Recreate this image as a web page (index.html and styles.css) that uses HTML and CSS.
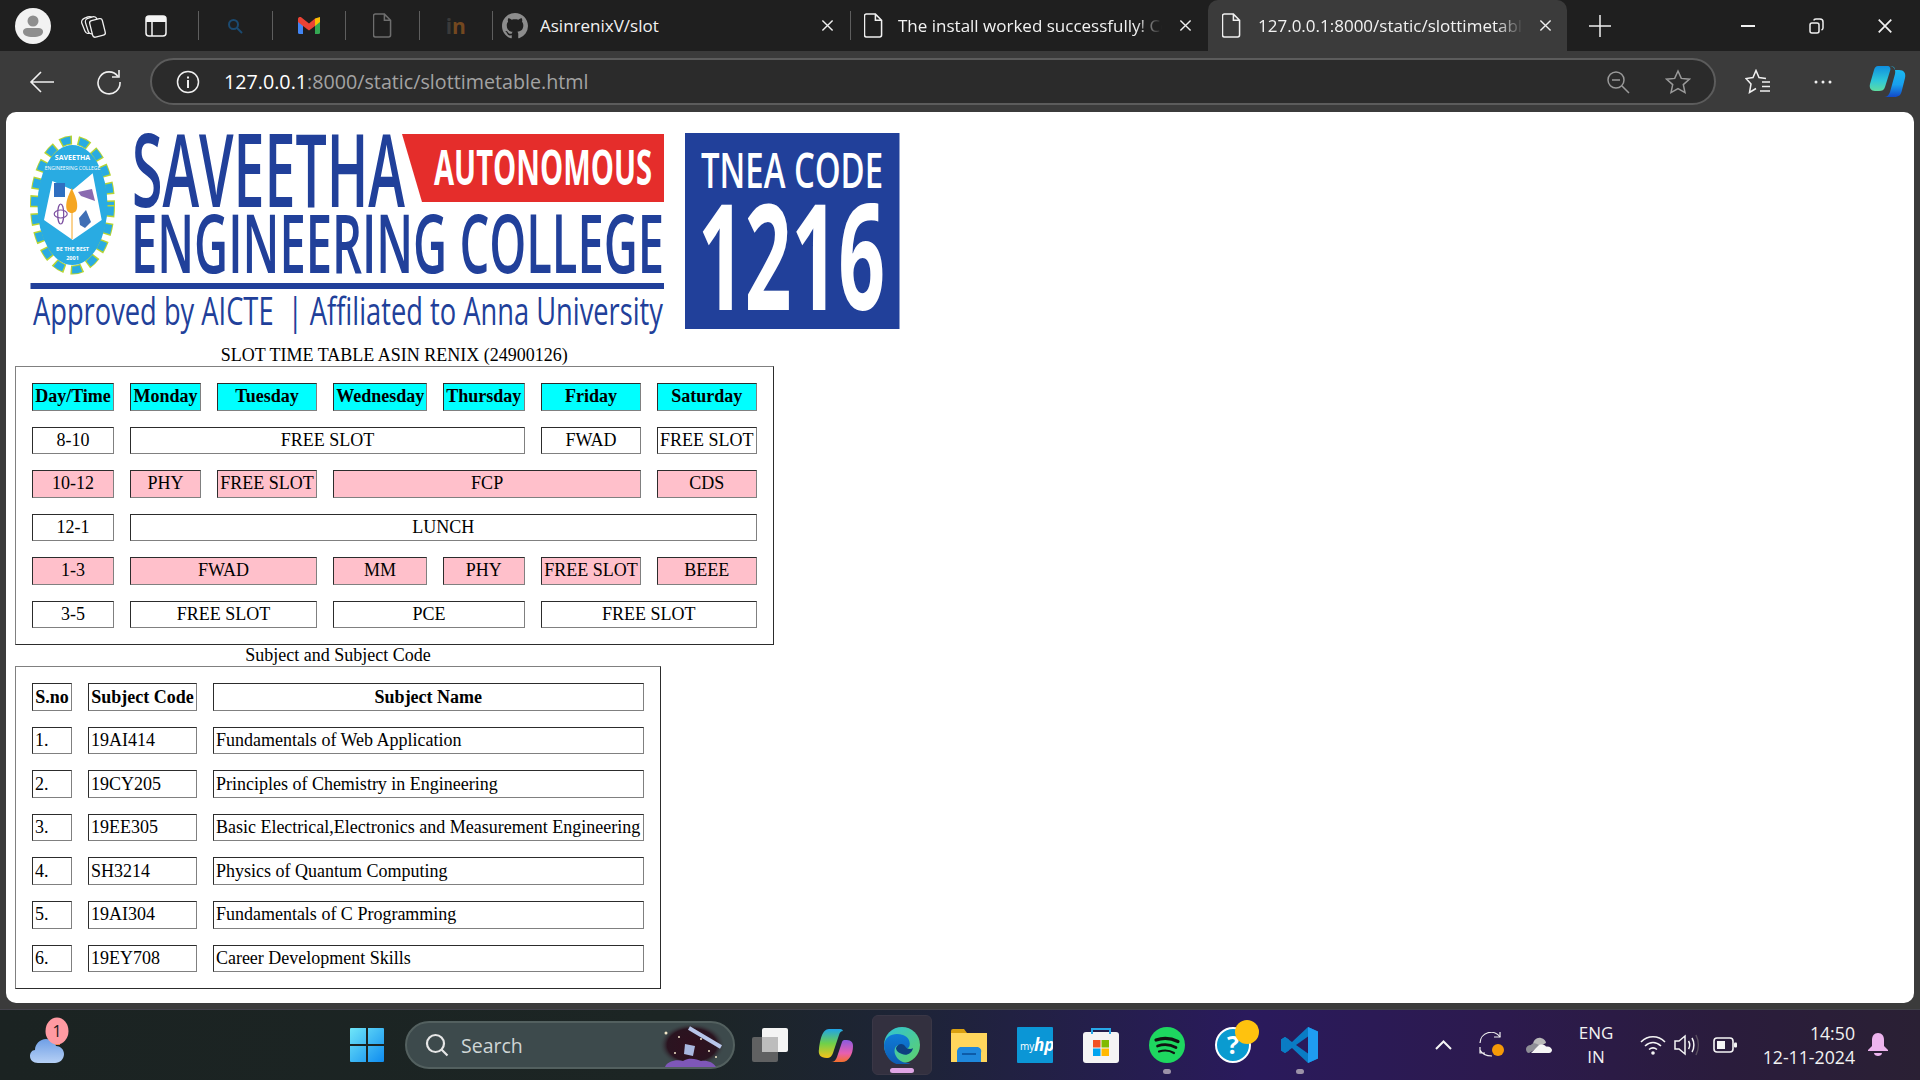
FILE: index.html
```html
<!DOCTYPE html>
<html lang="en">
<head>
  <meta charset="UTF-8" />
  <title>127.0.0.1:8000/static/slottimetable.html</title>
  <link rel="stylesheet" href="styles.css">
</head>
<body>

<svg class="defs" width="0" height="0">
  <symbol id="doc" viewBox="0 0 20 26"><path d="M2.5 1h9.5l6.5 6.5V23a2 2 0 0 1-2 2h-14a2 2 0 0 1-2-2V3a2 2 0 0 1 2-2z M12 1v6.5h6.5" fill="none" stroke="currentColor" stroke-width="1.6"/></symbol>
  <symbol id="cross" viewBox="0 0 14 14"><path d="M1.5 1.5l11 11M12.5 1.5l-11 11" fill="none" stroke="currentColor" stroke-width="1.5"/></symbol>
</svg>

<header class="tabbar">
  <div class="slot s-avatar">
    <svg width="36" height="36" viewBox="0 0 36 36"><circle cx="18" cy="18" r="18" fill="#f2f2f2"/><circle cx="18" cy="13" r="5.5" fill="#8e8e8e"/><path d="M8 24c0-3 2-4 5-4h10c3 0 5 1 5 4 0 3-4 5-10 5s-10-2-10-5z" fill="#8e8e8e"/></svg>
  </div>
  <div class="slot s-coll">
    <svg width="26" height="26" viewBox="0 0 26 26" fill="#1f1f1f" stroke="#f0f0f0" stroke-width="1.3"><rect x="2" y="4" width="12" height="16" rx="4" transform="rotate(-22 8 12)"/><rect x="5.500" y="4.500" width="12" height="16" rx="3.500" transform="rotate(-18 11 12)"/><rect x="10" y="6.500" width="13" height="17" rx="2.500" transform="rotate(-14 16 15)"/></svg>
  </div>
  <div class="slot s-side">
    <svg width="22" height="22" viewBox="0 0 22 22"><rect x="1" y="1" width="20" height="20" rx="3" fill="none" stroke="#f5f5f5" stroke-width="1.5"/><path d="M1 4a3 3 0 0 1 3-3h14a3 3 0 0 1 3 3v3H1z" fill="#f5f5f5"/><path d="M7 7v14" stroke="#f5f5f5" stroke-width="1.5"/></svg>
  </div>
  <i class="divider first"></i>
  <div class="slot pin">
    <svg width="16" height="16" viewBox="0 0 16 16" fill="none" stroke="#1b4a70" stroke-width="2"><circle cx="6.5" cy="6.5" r="4.5"/><path d="M10 10l5 5"/></svg>
  </div>
  <i class="divider"></i>
  <div class="slot pin">
    <svg width="22" height="17" viewBox="0 0 22 17"><path d="M0 3v12.5A1.5 1.5 0 0 0 1.500 17H5V8z" fill="#4285f4"/><path d="M22 3v12.500a1.500 1.500 0 0 1-1.500 1.500H17V8z" fill="#34a853"/><path d="M17 1.500L22 0v5l-5 4z" fill="#fbbc04"/><path d="M5 9L0 5V2c0-2 2.500-2.500 3.500-1.500L11 6.500l6-5V9l-6 4.500z" fill="#ea4335"/></svg>
  </div>
  <i class="divider"></i>
  <div class="slot pin dim"><svg width="19" height="25"><use href="#doc"/></svg></div>
  <i class="divider"></i>
  <div class="slot pin"><span class="in-mark"><span class="in-dot">i</span>n</span></div>
  <i class="divider"></i>

  <div class="tab">
    <div class="slot tab-icon">
      <svg width="26" height="26" viewBox="0 0 16 16"><path fill="#8c8c8c" d="M8 0C3.58 0 0 3.58 0 8c0 3.54 2.29 6.53 5.47 7.59.4.07.55-.17.55-.38 0-.19-.01-.82-.01-1.49-2.01.37-2.53-.49-2.69-.94-.09-.23-.48-.94-.82-1.13-.28-.15-.68-.52-.01-.53.63-.01 1.08.58 1.23.82.72 1.21 1.87.87 2.33.66.07-.52.28-.87.51-1.07-1.78-.2-3.64-.89-3.64-3.95 0-.87.31-1.59.82-2.15-.08-.2-.36-1.02.08-2.12 0 0 .67-.21 2.2.82.64-.18 1.32-.27 2-.27.68 0 1.36.09 2 .27 1.53-1.04 2.2-.82 2.2-.82.44 1.1.16 1.92.08 2.12.51.56.82 1.27.82 2.15 0 3.07-1.87 3.75-3.65 3.95.29.25.54.73.54 1.48 0 1.07-.01 1.93-.01 2.2 0 .21.15.46.55.38A8.013 8.013 0 0016 8c0-4.42-3.58-8-8-8z"/></svg>
    </div>
    <div class="tab-title">AsinrenixV/slot</div>
    <div class="slot tab-close"><svg width="13" height="13"><use href="#cross"/></svg></div>
  </div>
  <i class="divider"></i>
  <div class="tab">
    <div class="slot tab-icon"><svg width="19" height="25"><use href="#doc"/></svg></div>
    <div class="tab-title fade">The install worked successfully! Congratulations!</div>
    <div class="slot tab-close"><svg width="13" height="13"><use href="#cross"/></svg></div>
  </div>
  <div class="tab active">
    <div class="slot tab-icon"><svg width="19" height="25"><use href="#doc"/></svg></div>
    <div class="tab-title fade">127.0.0.1:8000/static/slottimetable.html</div>
    <div class="slot tab-close"><svg width="13" height="13"><use href="#cross"/></svg></div>
  </div>
  <div class="slot new-tab">
    <svg width="22" height="22" viewBox="0 0 22 22"><path d="M11 0v22M0 11h22" stroke="#f0f0f0" stroke-width="1.5"/></svg>
  </div>
  <div class="spacer"></div>
  <div class="slot win-btn"><svg width="14" height="2"><rect width="14" height="2" fill="#f0f0f0"/></svg></div>
  <div class="slot win-btn">
    <svg width="15" height="16" viewBox="0 0 15 16" fill="none" stroke="#f0f0f0" stroke-width="1.5"><rect x="1" y="5" width="9" height="10" rx="2"/><path d="M5 2.500C5 1.500 6 1 7 1h4c2 0 3 1 3 3v6c0 1-.5 1.500-1.500 2"/></svg>
  </div>
  <div class="slot win-btn last"><svg width="16" height="16"><use href="#cross"/></svg></div>
</header>

<nav class="toolbar">
  <div class="slot nav-back">
    <svg width="26" height="24" viewBox="0 0 26 24" fill="none" stroke="#f0f0f0" stroke-width="1.6"><path d="M25 12H2M12 2L2 12l10 10"/></svg>
  </div>
  <div class="slot nav-reload">
    <svg width="26" height="26" viewBox="0 0 26 26" fill="none" stroke="#f0f0f0" stroke-width="1.6"><path d="M22 7.500A11 11 0 1 0 24 13"/><path d="M23 1v7h-7"/></svg>
  </div>
  <div class="urlbar">
    <div class="slot url-info">
      <svg width="24" height="24" viewBox="0 0 24 24"><circle cx="12" cy="12" r="10.500" fill="none" stroke="#f0f0f0" stroke-width="1.5"/><rect x="11" y="10" width="2" height="8" fill="#f0f0f0"/><rect x="11" y="6.500" width="2" height="2" fill="#f0f0f0"/></svg>
    </div>
    <div class="url-text"><span class="url-host">127.0.0.1</span>:8000/static/slottimetable.html</div>
    <div class="slot url-act">
      <svg width="24" height="24" viewBox="0 0 24 24" fill="none" stroke="#9a9a9a" stroke-width="1.500"><circle cx="10" cy="10" r="8"/><path d="M6 10h8M16 16l7 7"/></svg>
    </div>
    <div class="slot url-act">
      <svg width="26" height="26" viewBox="0 0 26 26" fill="none" stroke="#9a9a9a" stroke-width="1.500"><path d="M13 2l3.300 7.400 8 .8-6 5.400 1.700 8L13 19.500 6 23.600l1.700-8-6-5.400 8-.8z"/></svg>
    </div>
  </div>
  <div class="slot tool-fav">
    <svg width="27" height="26" viewBox="0 0 27 26" fill="none" stroke="#f0f0f0" stroke-width="1.500"><path d="M21 9.500L14 8.500 11 1.500 8 8.500 1 9.500l5 5.500-1.500 8.500 6.500-4"/><path d="M17 13h8M17 17.500h8M15 22h10"/></svg>
  </div>
  <div class="slot tool-more">
    <svg width="18" height="4" viewBox="0 0 18 4" fill="#f0f0f0"><circle cx="2" cy="2" r="1.500"/><circle cx="9" cy="2" r="1.500"/><circle cx="16" cy="2" r="1.500"/></svg>
  </div>
  <div class="slot tool-copilot">
    <svg width="37" height="33" viewBox="0 0 37 33"><defs><linearGradient id="cp1" x1="0" y1="0" x2="0" y2="1"><stop offset="0" stop-color="#0f8fe0"/><stop offset=".6" stop-color="#2fc8d8"/><stop offset="1" stop-color="#5fdca0"/></linearGradient><linearGradient id="cp2" x1="0" y1="0" x2="0" y2="1"><stop offset="0" stop-color="#1bc0f0"/><stop offset=".6" stop-color="#18a0ee"/><stop offset="1" stop-color="#1248c8"/></linearGradient></defs><path d="M9 1h9c3 0 4 2 3 5l-5 16c-1 3-3 4-6 4H6c-4 0-6-3-5-7L5 5c1-3 2-4 4-4z" fill="url(#cp1)"/><path d="M21 1c3 0 5 1 5 4h4c5 0 7 3 6 8l-3 12c-1 5-3 7-8 7H15c3 0 5-2 6-5l5-18c1-4-1-8-5-8z" fill="url(#cp2)"/></svg>
  </div>
</nav>

<main class="page">
  <svg class="logo" width="889" height="222" viewBox="-1 0 889 222" font-family="'Open Sans', sans-serif" fill="#21409a">
    <path d="M386 12H648V80H406z" fill="#e52d2b"/>
    <text x="418" y="63" font-size="49" font-weight="700" fill="#fff" textLength="218" lengthAdjust="spacingAndGlyphs">AUTONOMOUS</text>
    <text x="116" y="85" font-size="101" font-weight="600" textLength="273" lengthAdjust="spacingAndGlyphs">SAVEETHA</text>
    <text x="115" y="151" font-size="81" font-weight="600" textLength="533" lengthAdjust="spacingAndGlyphs">ENGINEERING COLLEGE</text>
    <rect x="14.500" y="161" width="633.500" height="6"/>
    <text x="17" y="203" font-size="39" textLength="630" lengthAdjust="spacingAndGlyphs">Approved by AICTE&#160;&#160;|&#160;Affiliated to Anna University</text>
    <rect x="669" y="11" width="214.500" height="196"/>
    <text x="685" y="66" font-size="49" font-weight="600" fill="#fff" textLength="182" lengthAdjust="spacingAndGlyphs">TNEA CODE</text>
    <text x="682" y="188" font-size="147" font-weight="700" fill="#fff" textLength="187" lengthAdjust="spacingAndGlyphs">1216</text>

    <ellipse cx="56.500" cy="83" rx="38" ry="65" fill="none" stroke="#b7d433" stroke-width="9" stroke-dasharray="12 6"/>
    <ellipse cx="56.500" cy="83" rx="38" ry="65" fill="none" stroke="#29abe2" stroke-width="7" stroke-dasharray="9 9" stroke-dashoffset="-1.500"/>
    <ellipse cx="56.500" cy="83" rx="35" ry="60" fill="#29abe2"/>
    <path d="M28 98L36.300 59 56.700 68 76.700 51.300 85.700 98 56.700 118z" fill="#fff"/>
    <path d="M55.700 66c4 9 5.500 13 5.500 18s-2.500 7-5.500 7-5.500-2-5.500-7 1.500-9 5.500-18z" fill="#f5a623"/>
    <path d="M56 91v26" stroke="#f5a623" stroke-width="1"/>
    <rect x="38" y="61" width="11" height="14" fill="#2f6fc0"/>
    <ellipse cx="44.700" cy="92" rx="3" ry="10" fill="none" stroke="#7b4fa0" stroke-width="1.200"/>
    <ellipse cx="44.700" cy="92" rx="6.500" ry="4" fill="none" stroke="#7b4fa0" stroke-width="1.200"/>
    <path d="M63 96l7-8 5 12-6 6-5-3z" fill="#3f6fb5"/>
    <path d="M62 70l14-3 3 12-14-5z" fill="#8a6bb0"/>
    <text x="56.500" y="38" font-size="7" font-weight="700" fill="#fff" text-anchor="middle">SAVEETHA</text>
    <text x="56.500" y="48" font-size="5" fill="#fff" text-anchor="middle">ENGINEERING COLLEGE</text>
    <text x="56.500" y="129" font-size="5.500" font-weight="700" fill="#fff" text-anchor="middle">BE THE BEST</text>
    <text x="56.500" y="138" font-size="5.500" font-weight="700" fill="#fff" text-anchor="middle">2001</text>
  </svg>

  <table class="slots">
    <caption>SLOT TIME TABLE ASIN RENIX (24900126)</caption>
    <colgroup>
      <col class="c1"><col class="c2"><col class="c3"><col class="c4"><col class="c5"><col class="c6"><col class="c7">
    </colgroup>
    <tr class="head">
      <th>Day/Time</th><th>Monday</th><th>Tuesday</th><th>Wednesday</th><th>Thursday</th><th>Friday</th><th>Saturday</th>
    </tr>
    <tr>
      <td>8-10</td><td colspan="4">FREE SLOT</td><td>FWAD</td><td>FREE SLOT</td>
    </tr>
    <tr class="pink">
      <td>10-12</td><td>PHY</td><td>FREE SLOT</td><td colspan="3">FCP</td><td>CDS</td>
    </tr>
    <tr>
      <td>12-1</td><td colspan="6">LUNCH</td>
    </tr>
    <tr class="pink">
      <td>1-3</td><td colspan="2">FWAD</td><td>MM</td><td>PHY</td><td>FREE SLOT</td><td>BEEE</td>
    </tr>
    <tr>
      <td>3-5</td><td colspan="2">FREE SLOT</td><td colspan="2">PCE</td><td colspan="2">FREE SLOT</td>
    </tr>
  </table>

  <table class="subjects">
    <caption>Subject and Subject Code</caption>
    <colgroup>
      <col class="sc1"><col class="sc2"><col class="sc3">
    </colgroup>
    <tr><th>S.no</th><th>Subject Code</th><th>Subject Name</th></tr>
    <tr><td>1.</td><td>19AI414</td><td>Fundamentals of Web Application</td></tr>
    <tr><td>2.</td><td>19CY205</td><td>Principles of Chemistry in Engineering</td></tr>
    <tr><td>3.</td><td>19EE305</td><td>Basic Electrical,Electronics and Measurement Engineering</td></tr>
    <tr><td>4.</td><td>SH3214</td><td>Physics of Quantum Computing</td></tr>
    <tr><td>5.</td><td>19AI304</td><td>Fundamentals of C Programming</td></tr>
    <tr><td>6.</td><td>19EY708</td><td>Career Development Skills</td></tr>
  </table>
</main>

<footer class="taskbar">
  <div class="slot task-weather">
    <svg width="42" height="56" viewBox="0 0 42 56"><defs><linearGradient id="cloud" x1="0" y1="0" x2="0" y2="1"><stop offset="0" stop-color="#6f9fe6"/><stop offset="1" stop-color="#b6d0f5"/></linearGradient></defs><path d="M22 22h9v6h-9z" fill="#e8751a"/><path d="M9 46c-5 0-8-3-8-7 0-3 2-6 5-6 0-6 5-11 11-11 5 0 9 3 10 7 4 0 8 3 8 8 0 5-4 9-9 9z" fill="url(#cloud)"/><ellipse cx="28" cy="14" rx="11.500" ry="13.500" fill="#ff9aa2"/><text x="28" y="20" font-size="16" text-anchor="middle" fill="#1a1a1a" font-family="'Open Sans', sans-serif">1</text></svg>
  </div>
  <div class="slot task-start">
    <svg width="36" height="36" viewBox="0 0 36 36"><defs><linearGradient id="win" x1="0" y1="0" x2="1" y2="1"><stop offset="0" stop-color="#6fe6f8"/><stop offset="1" stop-color="#0f8cf0"/></linearGradient></defs><path fill="url(#win)" d="M1 2a1 1 0 0 1 1-1h15v16H1zM19 1h15a1 1 0 0 1 1 1v15H19zM1 19h16v16H2a1 1 0 0 1-1-1zM19 19h16v15a1 1 0 0 1-1 1H19z"/></svg>
  </div>
  <div class="search">
    <svg class="search-ico" width="24" height="24" viewBox="0 0 24 24" fill="none" stroke="#e6e6e6" stroke-width="2.200"><circle cx="10.500" cy="10.500" r="8.500"/><path d="M16.500 16.500l6 6"/></svg>
    <span class="search-text">Search</span>
    <svg class="search-art" width="66" height="44" viewBox="0 0 66 44">
      <defs><radialGradient id="night"><stop offset="0" stop-color="#30101f"/><stop offset=".75" stop-color="#2a1420"/><stop offset="1" stop-color="#3d4a4c" stop-opacity="0"/></radialGradient></defs>
      <ellipse cx="33" cy="22" rx="33" ry="22" fill="url(#night)"/>
      <path d="M6 44c2-6 12-8 18-6 6-4 14-2 18 0 6-1 12 1 15 6z" fill="#7e57b8"/>
      <path d="M30 5l32 19" stroke="#b8c6ea" stroke-width="4"/>
      <path d="M26 21l10 2-2 10-9-2z" fill="#a9b8e0"/>
      <g fill="#f3e6c8"><circle cx="7" cy="10" r="1.500"/><circle cx="20" cy="14" r="1"/><circle cx="50" cy="28" r="1"/><circle cx="16" cy="30" r="1"/><circle cx="42" cy="16" r="1"/><circle cx="57" cy="34" r="1"/></g>
    </svg>
  </div>
  <div class="slot task-app first-app">
    <svg width="36" height="36" viewBox="0 0 36 36"><rect x="10" y="1" width="26" height="24" rx="2" fill="#f4f4f4"/><rect x="0" y="10" width="26" height="25" rx="2" fill="#6c6c6c" fill-opacity=".85"/><rect x="10" y="10" width="16" height="15" fill="#bdbdbd"/></svg>
  </div>
  <div class="slot task-app">
    <svg width="36" height="34" viewBox="0 0 36 34"><defs><linearGradient id="rb" x1="0" y1="0" x2="0" y2="1"><stop offset="0" stop-color="#1fa4e8"/><stop offset=".5" stop-color="#6fd04a"/><stop offset="1" stop-color="#f7c21a"/></linearGradient><linearGradient id="rb2" x1="0" y1="0" x2="0" y2="1"><stop offset="0" stop-color="#8a5be0"/><stop offset=".6" stop-color="#e85fb0"/><stop offset="1" stop-color="#f5702a"/></linearGradient></defs><path d="M27 12c5 0 8 1 8 6 0 8-4 16-11 16H13c3 0 5-2 6-5l5-15c.5-1.500 1.500-2 3-2z" fill="url(#rb2)"/><path d="M11 1h10c2 0 3 0 4 2-2 0-3 1-4 4l-6 18c-1 3-3 5-6 5-7 0-9-4-8-9C2 13 4 1 11 1z" fill="url(#rb)"/></svg>
  </div>
  <div class="slot task-app current">
    <svg width="38" height="38" viewBox="0 0 38 38"><defs><linearGradient id="ed1" x1="0" y1="0" x2="1" y2="1"><stop offset="0" stop-color="#2fc3d8"/><stop offset="1" stop-color="#5fd068"/></linearGradient><linearGradient id="ed2" x1="0" y1="0" x2="0" y2="1"><stop offset="0" stop-color="#0f7bd8"/><stop offset="1" stop-color="#0d5bb0"/></linearGradient></defs><circle cx="19" cy="19" r="18" fill="url(#ed1)"/><path d="M1 19C2 9 12 6 20 9c6 2 8 8 6 12-2 3-7 2-7-1-4-3-9 1-7 8 2 6 8 9 13 9 2 0 3 0 4-1-3 2-6 3-10 3C9 39 1 30 1 19z" fill="url(#ed2)"/><path d="M13 22c2-5 7-5 9-2 1 3 6 4 8 2-1 6-7 8-11 6-3-1-6-3-6-6z" fill="#0d3f80"/></svg>
    <i class="run-bar"></i>
  </div>
  <div class="slot task-app">
    <svg width="36" height="33" viewBox="0 0 36 33"><path d="M0 2a2 2 0 0 1 2-2h11l3 4h20v3H0z" fill="#d9a010"/><path d="M0 4h36v29H0z" fill="#ffd65c"/><path d="M6 33v-9a6 6 0 0 1 3-6h18a5 5 0 0 1 3 6v9z" fill="#1f88dc"/><rect x="11" y="24" width="14" height="2" fill="#0d5ba8"/></svg>
  </div>
  <div class="slot task-app">
    <svg width="36" height="36" viewBox="0 0 36 36" font-family="'Open Sans', sans-serif" fill="#fff"><rect width="36" height="36" rx="1" fill="#0b96d6"/><text x="3" y="23" font-size="10">my</text><text x="17" y="24" font-size="17" font-weight="700" font-style="italic">hp</text></svg>
  </div>
  <div class="slot task-app">
    <svg width="36" height="36" viewBox="0 0 36 36"><rect y="5" width="36" height="31" rx="3" fill="#f4f4f4"/><path d="M9 7V2h18v5" fill="none" stroke="#28a8e8" stroke-width="2"/><rect x="10" y="13" width="7.500" height="7.500" fill="#f25022"/><rect x="18.500" y="13" width="7.500" height="7.500" fill="#7fba00"/><rect x="10" y="21.500" width="7.500" height="7.500" fill="#00a4ef"/><rect x="18.500" y="21.500" width="7.500" height="7.500" fill="#ffb900"/></svg>
  </div>
  <div class="slot task-app">
    <svg width="36" height="36" viewBox="0 0 36 36"><circle cx="18" cy="18" r="18" fill="#1ed760"/><g fill="none" stroke="#111" stroke-linecap="round"><path d="M7 13c7-2.500 15-2 22 1.500" stroke-width="3.200"/><path d="M8.500 19c6-2 13-1.500 18.500 1.500" stroke-width="2.700"/><path d="M10 24.500c5-1.500 11-1 15 1.500" stroke-width="2.200"/></g></svg>
    <i class="run-dot"></i>
  </div>
  <div class="slot task-app">
    <svg width="60" height="60" viewBox="0 0 60 60"><circle cx="30" cy="30" r="17" fill="#0a9bd0" stroke="#fff" stroke-width="2"/><text x="30" y="39" font-size="25" font-weight="700" fill="#fff" text-anchor="middle" font-family="'Open Sans', sans-serif">?</text><circle cx="44" cy="17" r="12" fill="#ffc20e"/></svg>
  </div>
  <div class="slot task-app">
    <svg width="37" height="36" viewBox="0 0 37 36"><path d="M27 0l10 4.500v27L27 36 11 21l-7 5-4-2.500v-11L4 10l7 5z" fill="#0a7cc4"/><path d="M27 0l10 4.500v27L27 36z" fill="#1f9cf0"/><path d="M27 9.500L15 18l12 8.500z" fill="#2a1a5c"/><path d="M4 10l4 2.500-4 5.500 4 5.500-4 2.500-4-2.500v-11z" fill="#0a7cc4"/></svg>
    <i class="run-dot"></i>
  </div>
  <div class="spacer"></div>
  <div class="slot tray t-chev">
    <svg width="17" height="10" viewBox="0 0 17 10" fill="none" stroke="#f5f5f5" stroke-width="2"><path d="M1 9l7.500-7.500L16 9"/></svg>
  </div>
  <div class="slot tray t-sync">
    <svg width="26" height="26" viewBox="0 0 26 26" fill="none" stroke="#f0f0f0" stroke-width="1.200"><path d="M22 5A11 11 0 0 0 2 11"/><path d="M22 0v5h-6"/><path d="M2 15v6h5M2 18c2 4 6 6 12 6"/><circle cx="20" cy="18" r="6" fill="#f59a07" stroke="none"/></svg>
  </div>
  <div class="slot tray t-cloud">
    <svg width="26" height="16" viewBox="0 0 26 16"><path d="M7 8c0-5 4-8 8-7 3 .5 5 3 5 5l-8 4z" fill="#b9b9b9"/><path d="M3 16c-2 0-3-2-3-4s2-4 5-4c1-2 4-2 6-1l4 2z" fill="#8e8e96"/><path d="M5 16h18c2 0 3-1.500 3-3s-2-4-6-3.500C18 7 14 7 12 9z" fill="#f5f5f5"/></svg>
  </div>
  <div class="tray-lang"><span>ENG</span><span>IN</span></div>
  <div class="slot tray t-wifi">
    <svg width="26" height="20" viewBox="0 0 26 20" fill="none" stroke="#f5f5f5" stroke-width="1.600"><path d="M1 7c7-7 17-7 24 0M5 11c5-4.500 11-4.500 16 0M9 14.500c2.500-2 5.500-2 8 0"/><circle cx="13" cy="18" r="1.800" fill="#f5f5f5" stroke="none"/></svg>
  </div>
  <div class="slot tray t-vol">
    <svg width="26" height="24" viewBox="0 0 26 24" fill="none" stroke="#f5f5f5" stroke-width="1.500"><path d="M1 8h4l6-5v18l-6-5H1z"/><path d="M14.500 8c1.500 2.500 1.500 5.500 0 8M18 5c2.500 4 2.500 10 0 14"/><path d="M22 2c3 6 3 14 0 20" stroke="#5a5060"/></svg>
  </div>
  <div class="slot tray t-batt">
    <svg width="24" height="16" viewBox="0 0 24 16"><rect x="1" y="1" width="19" height="14" rx="3" fill="none" stroke="#f5f5f5" stroke-width="1.600"/><rect x="4" y="4" width="8" height="8" fill="#f5f5f5"/><rect x="21" y="5.500" width="3" height="5" rx="1" fill="#f5f5f5"/></svg>
  </div>
  <div class="tray-clock"><span>14:50</span><span>12-11-2024</span></div>
  <div class="slot tray t-bell">
    <svg width="20" height="24" viewBox="0 0 20 24" fill="#edb4ee"><path d="M10 0c4 0 6 3 6 7v6l4 4v1H0v-1l4-4V7c0-4 2-7 6-7z"/><path d="M6 20h8c0 2-2 3-4 3s-4-1-4-3z"/></svg>
  </div>
</footer>

</body>
</html>
```

FILE: styles.css
```css
* {
  box-sizing: border-box;
}

html,
body {
  margin: 0;
  height: 1080px;
  overflow: hidden;
}

body {
  width: 1920px;
  display: flex;
  flex-direction: column;
  background-color: #3b3b3b;
  font-family: "Open Sans", sans-serif;
  color: #f2f2f2;
}

.defs {
  position: absolute;
}

.slot {
  display: flex;
  align-items: center;
  justify-content: center;
  flex: none;
}

.spacer {
  flex: 1;
}

/* tab strip */
.tabbar {
  height: 51px;
  flex: none;
  display: flex;
  align-items: center;
  background-color: #1f1f1f;
}

.s-avatar { width: 66px; }
.s-coll { width: 56px; }
.s-side { width: 68px; }

.divider {
  width: 1px;
  height: 29px;
  flex: none;
  background-color: #5e5e5e;
}

.divider.first {
  margin-left: 8px;
}

.pin {
  width: 72.5px;
  height: 51px;
}

.dim {
  color: #6e6e6e;
}

.in-mark {
  font-size: 21px;
  font-weight: 700;
  color: #74481f;
}

.in-dot {
  color: #3a3a3a;
}

.tab {
  width: 357px;
  height: 51px;
  display: flex;
  align-items: center;
  flex: none;
}

.tab.active {
  width: 359px;
  background-color: #3b3b3b;
  border-radius: 10px 10px 0 0;
}

.tab-icon {
  width: 44px;
  color: #f0f0f0;
}

.tab-title {
  flex: 1;
  min-width: 0;
  margin-left: 3px;
  font-size: 17px;
  white-space: nowrap;
  overflow: hidden;
}

.active .tab-icon {
  width: 46px;
}

.active .tab-title {
  margin-left: 4px;
}

.active .tab-close {
  width: 44px;
}

.fade {
  -webkit-mask-image: linear-gradient(to right, #000 90%, transparent 100%);
  mask-image: linear-gradient(to right, #000 90%, transparent 100%);
}

.tab-close {
  width: 46px;
  color: #f0f0f0;
}

.new-tab {
  width: 66px;
}

.win-btn {
  width: 68px;
  color: #f0f0f0;
}

.win-btn.last {
  width: 70px;
}

/* address bar row */
.toolbar {
  height: 61px;
  flex: none;
  display: flex;
  align-items: center;
  padding-left: 9px;
}

.nav-back { width: 66px; }
.nav-reload { width: 67px; margin-right: 8px; }

.urlbar {
  width: 1566px;
  height: 47px;
  flex: none;
  display: flex;
  align-items: center;
  padding-right: 6px;
  background-color: #2b2b2b;
  border: 2px solid #5c5c5c;
  border-radius: 24px;
}

.url-info {
  width: 72px;
}

.url-text {
  flex: 1;
  font-size: 19.7px;
  color: #a3a3a3;
}

.url-host {
  color: #ffffff;
}

.url-act {
  width: 60px;
}

.tool-fav { width: 66px; margin-left: 9px; }
.tool-more { width: 64px; }
.tool-copilot { width: 65px; }

/* page */
.page {
  height: 891px;
  flex: none;
  margin: 0 6px;
  padding: 10px 9px 0;
  background-color: #ffffff;
  border-radius: 10px;
  font-family: "Liberation Serif", "Times New Roman", serif;
  font-size: 18px;
  color: #000000;
}

.logo {
  display: block;
}

table {
  table-layout: fixed;
  border-collapse: separate;
  border-spacing: 16px;
  border: 1px outset #808080;
}

caption {
  height: 22px;
  line-height: 22px;
}

th,
td {
  height: 27.55px;
  padding: 1px 2px;
  border: 1px inset #808080;
  line-height: 21px;
  white-space: nowrap;
  overflow: hidden;
}

.slots {
  width: 758.6px;
}

.slots td {
  text-align: center;
}

.c1 { width: 82px; }
.c2 { width: 70.8px; }
.c3 { width: 100.4px; }
.c4 { width: 93.7px; }
.c5 { width: 81.9px; }
.c6 { width: 100.3px; }
.c7 { width: 99.5px; }

.head th {
  background-color: #00ffff;
}

.pink td {
  background-color: #ffc0cb;
}

.subjects {
  width: 645.8px;
}

.subjects caption {
  height: 21px;
  line-height: 21px;
}

.sc1 { width: 39.9px; }
.sc2 { width: 109px; }
.sc3 { width: 430.9px; }

/* taskbar */
.taskbar {
  height: 71px;
  flex: none;
  margin-top: 6px;
  display: flex;
  align-items: center;
  border-top: 1px solid #44434c;
  background: linear-gradient(to right, #1b2322 0%, #1c2524 35%, #1d2436 47%, #2a1a5c 65%, #2c1a4e 78%, #2a1c3c 90%, #2a2034 100%);
}

.task-weather {
  width: 50px;
  margin-left: 25px;
  margin-right: 267px;
}

.task-start {
  width: 50px;
}

.search {
  width: 330px;
  height: 48px;
  flex: none;
  margin-left: 13px;
  display: flex;
  align-items: center;
  padding-left: 18px;
  background-color: #3d4a4c;
  border: 2px solid #53605f;
  border-radius: 24px;
}

.search-text {
  flex: 1;
  margin-left: 12px;
  font-size: 19.5px;
  color: #cfd6d6;
}

.search-art {
  margin-right: 8px;
}

.task-app {
  width: 66.2px;
  height: 60px;
  position: relative;
}

.first-app {
  margin-left: 2px;
}

.current {
  width: 60px;
  margin: 0 3.1px;
  background-color: #33303f;
  border-radius: 6px;
  border: 1px solid #3a3746;
}

.run-bar {
  position: absolute;
  left: 17px;
  bottom: 1px;
  width: 24px;
  height: 5px;
  border-radius: 3px;
  background-color: #dfa5e5;
}

.run-dot {
  position: absolute;
  left: 29px;
  bottom: 1px;
  width: 8px;
  height: 5px;
  border-radius: 3px;
  background-color: #9c92a8;
}

.t-chev { width: 28px; }
.t-sync { width: 68px; }
.t-cloud { width: 28px; }

.tray-lang,
.tray-clock {
  display: flex;
  flex-direction: column;
  flex: none;
  line-height: 24px;
}

.tray-lang {
  width: 86px;
  font-size: 17px;
  align-items: center;
}

.t-wifi { width: 28px; }
.t-vol { width: 40px; }
.t-batt { width: 36px; }

.tray-clock {
  width: 112px;
  font-size: 17.7px;
  align-items: flex-end;
}

.t-bell {
  width: 46px;
  margin-right: 19px;
}
```
